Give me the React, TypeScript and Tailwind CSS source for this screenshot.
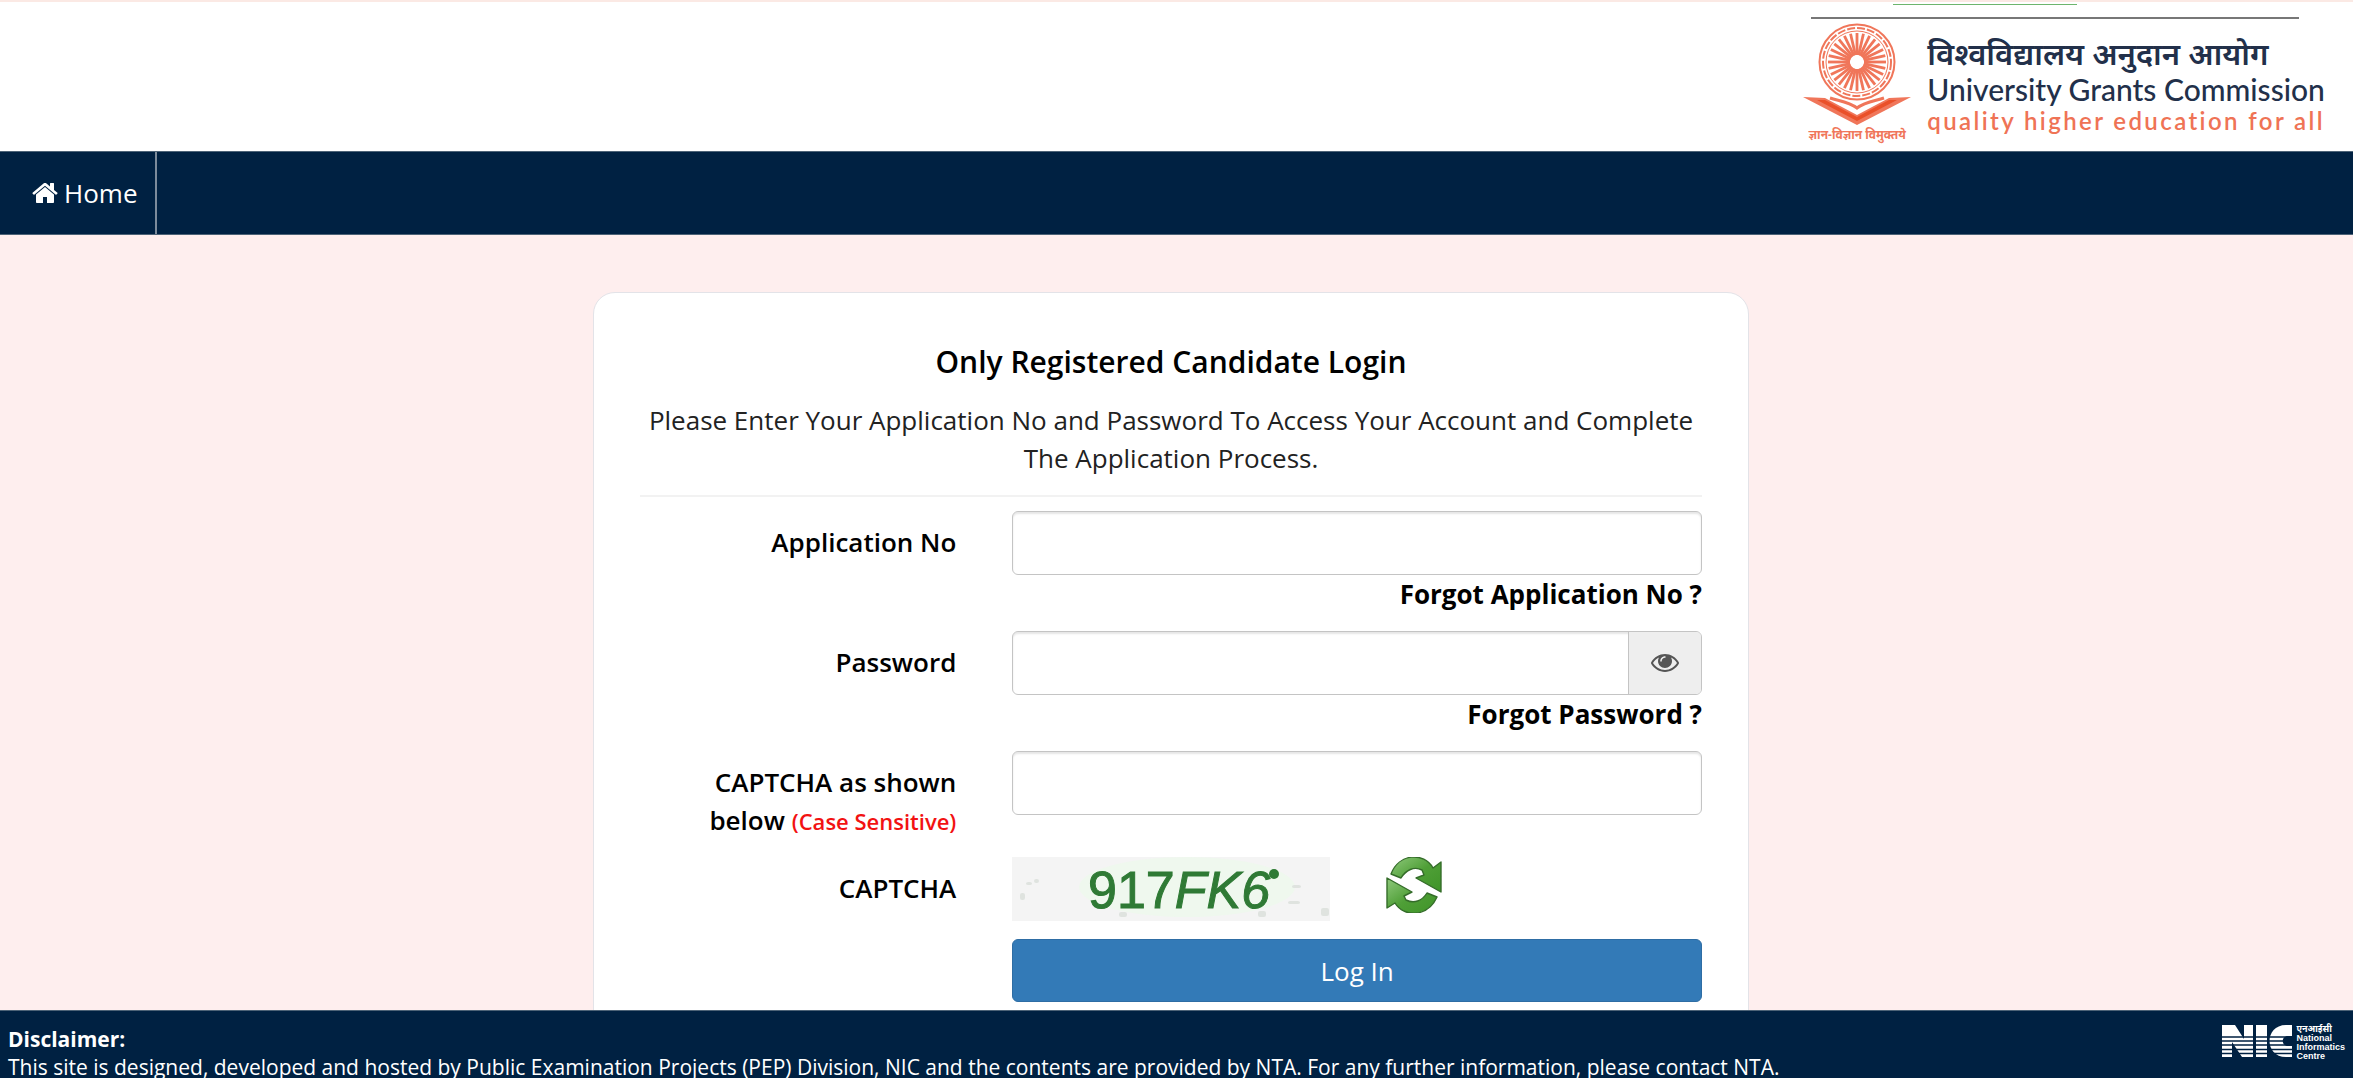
import React from "react";

const wheelSpokes = Array.from({ length: 28 }, (_, i) => (i * 360) / 28);

const noise = [
  { x: 22, y: 22, w: 5, h: 4 },
  { x: 14, y: 25, w: 6, h: 3 },
  { x: 8, y: 36, w: 5, h: 7 },
  { x: 280, y: 28, w: 9, h: 3 },
  { x: 276, y: 44, w: 12, h: 3 },
  { x: 309, y: 51, w: 8, h: 8 },
  { x: 107, y: 55, w: 8, h: 5 },
  { x: 246, y: 54, w: 8, h: 6 },
];

const inputClass =
  "block h-16 w-full rounded-md border border-[#c4c4c4] bg-white px-6 shadow-[inset_0_2px_2px_rgba(0,0,0,0.1)] outline-none";
const labelClass = "pt-3 text-right font-semibold text-black";

const HomeIcon = () => (
  <svg viewBox="0 0 26 28" className="h-7 w-[26px]" fill="currentColor" aria-hidden="true">
    <path d="M22 15.500v7.500c0 0.547-0.453 1-1 1h-6v-6h-4v6h-6c-0.547 0-1-0.453-1-1v-7.500c0-0.031 0.016-0.063 0.016-0.094l8.984-7.406 8.984 7.406c0.016 0.031 0.016 0.063 0.016 0.094zM25.484 14.422l-0.969 1.156c-0.078 0.094-0.203 0.156-0.328 0.172h-0.047c-0.125 0-0.234-0.031-0.328-0.109l-10.813-9.016-10.813 9.016c-0.109 0.078-0.234 0.125-0.375 0.109-0.125-0.016-0.250-0.078-0.328-0.172l-0.969-1.156c-0.172-0.203-0.141-0.531 0.063-0.703l11.234-9.359c0.656-0.547 1.719-0.547 2.375 0l3.813 3.187v-3.047c0-0.281 0.219-0.500 0.500-0.500h3c0.281 0 0.500 0.219 0.500 0.500v6.375l3.422 2.844c0.203 0.172 0.234 0.500 0.063 0.703z" />
  </svg>
);

const EyeIcon = () => (
  <svg viewBox="0 1 28 28" className="size-7" fill="currentColor" aria-hidden="true">
    <path d="M26 15c-1.484-2.297-3.516-4.266-5.953-5.516 0.625 1.062 0.953 2.281 0.953 3.516 0 3.859-3.141 7-7 7s-7-3.141-7-7c0-1.234 0.328-2.453 0.953-3.516-2.438 1.250-4.469 3.219-5.953 5.516 2.672 4.125 7.031 7 12 7s9.328-2.875 12-7zM14.750 9c0-0.406-0.344-0.750-0.750-0.750-2.594 0-4.750 2.156-4.750 4.750 0 0.406 0.344 0.750 0.750 0.750s0.750-0.344 0.750-0.750c0-1.781 1.469-3.250 3.250-3.250 0.406 0 0.750-0.344 0.750-0.750zM28 15c0 0.391-0.125 0.750-0.313 1.078-2.875 4.734-8.125 7.922-13.687 7.922s-10.813-3.203-13.687-7.922c-0.188-0.328-0.313-0.688-0.313-1.078s0.125-0.750 0.313-1.078c2.875-4.719 8.125-7.922 13.687-7.922s10.813 3.203 13.687 7.922c0.188 0.328 0.313 0.688 0.313 1.078z" />
  </svg>
);

const UgcEmblem = () => (
  <svg viewBox="0 0 108 104" className="h-[104px] w-[108px]" aria-hidden="true">
    <g fill="none" stroke="#f0765a">
      <circle cx="54" cy="39" r="37.500" strokeWidth="2" />
      <circle cx="54" cy="39" r="34" strokeWidth="2" strokeDasharray="8 2" />
      <circle cx="54" cy="39" r="31" strokeWidth="1" />
      {wheelSpokes.map((deg) => (
        <line
          key={deg}
          x1="54"
          y1="32"
          x2="54"
          y2="10"
          strokeWidth="2.8"
          transform={`rotate(${deg} 54 39)`}
        />
      ))}
    </g>
    <path
      d="M27 75 C36 78 46 79 54 85 C62 79 72 78 81 75"
      fill="none"
      stroke="#f0765a"
      strokeWidth="3"
    />
    <path d="M0 74 L22 75 L54 92 L86 75 L108 74 L54 102 Z" fill="#f0765a" />
    <path d="M14 77 L22 77 L54 94 L86 77 L94 77 L54 98 Z" fill="#ea5029" />
  </svg>
);

const RefreshArrows = () => (
  <svg viewBox="0 0 56 56" className="size-14" aria-hidden="true">
    <defs>
      <linearGradient id="leaf" x1="0" y1="0" x2="1" y2="1">
        <stop offset="0" stopColor="#8fc97c" />
        <stop offset="0.5" stopColor="#4f9f37" />
        <stop offset="1" stopColor="#3f9428" />
      </linearGradient>
    </defs>
    <g fill="url(#leaf)" stroke="#356d2a" strokeWidth="1.4" strokeLinejoin="round">
      <path d="M5 17 C13 -4 38 -5 47 11 L55 5 L55 35 L30 21 L38 18 L36 13 C28 9 20 13 15 21 Z" />
      <path d="M51 40 C42 60 18 61 9 46 L1 51 L1 21 L26 35 L18 39 L20 43 C28 47 36 44 41 36 Z" />
    </g>
  </svg>
);

const NicMark = () => (
  <svg viewBox="0 0 70 32" className="h-8 w-[70px]" aria-hidden="true">
    <g fill="#fff">
      <path d="M0 0 H13 L22 14 V0 H31 V32 H20 L10 17 V32 H0 Z" />
      <path d="M34 0 H45 V32 H34 Z" />
      <path d="M70 0 H64 C42 0 42 32 64 32 H70 V21 H66 C59 21 59 11 66 11 H70 Z" />
    </g>
    <path
      d="M0 12 H70 M0 16 H70 M0 20 H70 M0 24.500 H70 M0 28.500 H70"
      stroke="#002142"
      strokeWidth="1.4"
    />
  </svg>
);

const App = () => {
  return (
    <div className="flex h-screen flex-col overflow-hidden bg-[#feeeee] font-['Open_Sans','Noto_Sans',sans-serif] text-[26px] leading-[38px] text-[#222]">
      <header className="flex shrink-0 flex-col items-end border-t-2 border-[#fbe9e4] bg-white pr-7">
        <div className="mr-[248px] h-[3px] w-[184px] border-b border-[#6db56d]" />
        <div className="mt-[12px] mr-[26px] h-[2px] w-[488px] bg-[#777]" />
        <div className="flex h-[132px] items-start gap-4">
          <div className="flex flex-col items-center pt-1">
            <UgcEmblem />
            <span className="text-xs leading-4 font-bold whitespace-nowrap text-[#f0765a]">
              ज्ञान-विज्ञान विमुक्तये
            </span>
          </div>
          <div className="pt-4 whitespace-nowrap">
            <p className="text-[31px] leading-9 font-semibold text-[#22304a]">
              विश्वविद्यालय अनुदान आयोग
            </p>
            <p className="font-['Lato',sans-serif] text-3xl leading-9 font-medium text-[#22304a]">
              University Grants Commission
            </p>
            <p className="font-['Lato',sans-serif] text-2xl leading-7 font-semibold tracking-widest text-[#ef7355]">
              quality higher education for all
            </p>
          </div>
        </div>
      </header>

      <nav className="flex shrink-0 border-y border-[#4d6377] bg-[#002142]">
        <a
          href="#home"
          className="flex items-center gap-[6px] border-r-2 border-[#7c8b9b] py-[22px] pr-[18px] pl-8 text-white"
        >
          <HomeIcon />
          Home
        </a>
      </nav>

      <main className="min-h-0 flex-1 overflow-hidden pt-[57px] pr-[11px]">
        <form className="mx-auto max-w-[1156px] rounded-[22px] border border-[#e3e3e8] bg-white px-[46px] pt-[50px] pb-10">
          <h1 className="text-center text-3xl leading-[38px] font-semibold text-black">
            Only Registered Candidate Login
          </h1>
          <p className="mt-5 border-b-2 border-[#f2f2f2] pb-[18px] text-center">
            Please Enter Your Application No and Password To Access Your Account and Complete The
            Application Process.
          </p>
          <div className="mt-[14px] grid grid-cols-[316fr_689fr] gap-x-14 gap-y-[18px]">
            <label htmlFor="application" className={labelClass}>
              Application No
            </label>
            <div>
              <input id="application" type="text" className={inputClass} />
              <a href="#forgot-application" className="block text-right font-bold text-black">
                Forgot Application No ?
              </a>
            </div>

            <label htmlFor="password" className={labelClass}>
              Password
            </label>
            <div>
              <div className="flex h-16 overflow-hidden rounded-md border border-[#c4c4c4] shadow-[inset_0_2px_2px_rgba(0,0,0,0.1)]">
                <input
                  id="password"
                  type="password"
                  className="min-w-0 flex-1 bg-transparent px-6 outline-none"
                />
                <button
                  type="button"
                  aria-label="Show password"
                  className="flex w-[73px] items-center justify-center border-l border-[#c4c4c4] bg-[#eee] text-[#555]"
                >
                  <EyeIcon />
                </button>
              </div>
              <a href="#forgot-password" className="block text-right font-bold text-black">
                Forgot Password ?
              </a>
            </div>

            <label htmlFor="captcha" className={labelClass}>
              CAPTCHA as shown below{" "}
              <span className="text-[22px] leading-none text-[#f21212]">(Case Sensitive)</span>
            </label>
            <div>
              <input id="captcha" type="text" className={inputClass} />
            </div>

            <p className={labelClass}>CAPTCHA</p>
            <div className="flex items-start gap-14">
              <svg viewBox="0 0 318 64" className="h-16 w-[318px] bg-[#f4f4f4]">
                <ellipse cx="175" cy="30" rx="108" ry="30" fill="#eff8ee" />
                {noise.map((n) => (
                  <rect
                    key={`${n.x}-${n.y}`}
                    x={n.x}
                    y={n.y}
                    width={n.w}
                    height={n.h}
                    rx="2"
                    fill="#dfe3df"
                  />
                ))}
                <text
                  x="76"
                  y="51"
                  fontFamily="Liberation Sans, sans-serif"
                  fontSize="52"
                  fill="#2f7a35"
                  stroke="#2f7a35"
                >
                  917<tspan fontStyle="italic">FK6</tspan>
                </text>
                <circle cx="262" cy="17" r="5" fill="#2f7a35" />
              </svg>
              <button type="button" aria-label="Refresh captcha">
                <RefreshArrows />
              </button>
            </div>

            <button
              type="submit"
              className="col-start-2 h-[63px] rounded-md border border-[#2e6da4] bg-[#337ab7] text-white"
            >
              Log In
            </button>
          </div>
        </form>
      </main>

      <footer className="flex h-[68px] shrink-0 items-start justify-between overflow-hidden border-t border-[#4d6377] bg-[#002142] px-2 pt-[14px] text-[21px] leading-7 text-white">
        <div>
          <p className="font-bold">Disclaimer:</p>
          <p>
            This site is designed, developed and hosted by Public Examination Projects (PEP) Division,
            NIC and the contents are provided by NTA. For any further information, please contact NTA.
          </p>
        </div>
        <div className="flex items-start gap-1">
          <NicMark />
          <div className="font-['Liberation_Sans','Noto_Sans',sans-serif] text-[9px] leading-[9px] font-bold">
            <p>एनआईसी</p>
            <p>National</p>
            <p>Informatics</p>
            <p>Centre</p>
          </div>
        </div>
      </footer>
    </div>
  );
};

export default App;
